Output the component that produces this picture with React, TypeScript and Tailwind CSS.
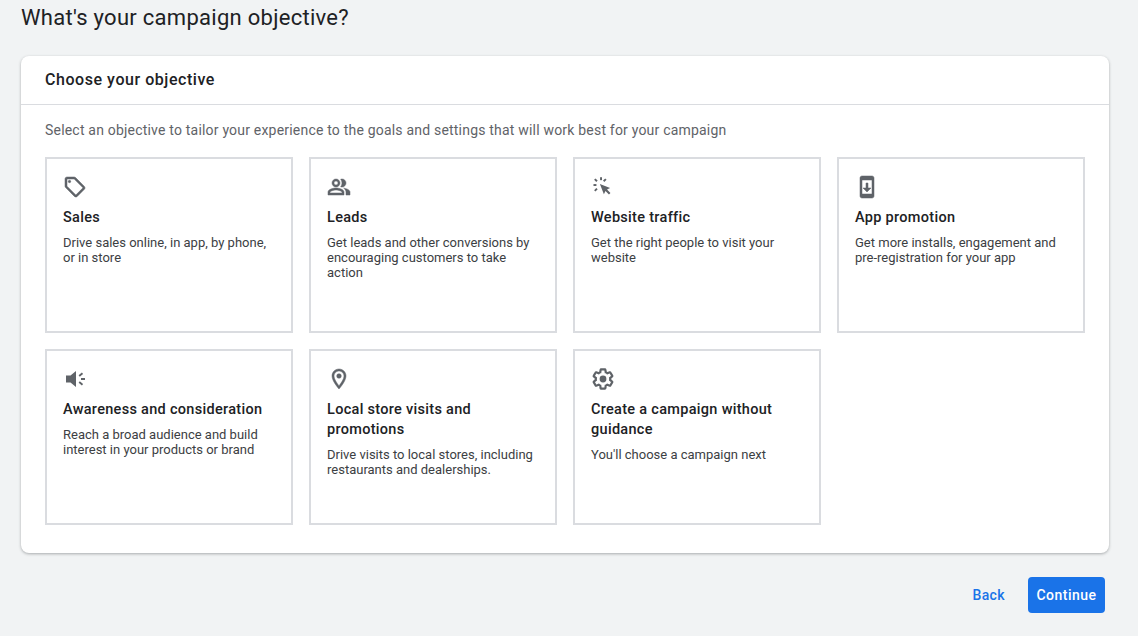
import type { ReactNode } from "react";

const iconGray = "#5f6368";

function SalesIcon() {
  return (
    <svg width="24" height="24" viewBox="0 0 24 24" fill={iconGray} stroke={iconGray} strokeWidth="0.5">
      <path d="M21.410 11.410l-8.830-8.830C12.210 2.210 11.700 2 11.170 2H4C2.900 2 2 2.900 2 4v7.170c0 .53.21 1.040.59 1.410l8.830 8.830c.78.78 2.050.78 2.830 0l7.170-7.170c.78-.78.78-2.040-.01-2.830zM12.830 20L4 11.170V4h7.170L20 12.830 12.830 20z" />
      <circle cx="6.500" cy="6.500" r="1.200" />
    </svg>
  );
}

function LeadsIcon() {
  return (
    <svg width="24" height="24" viewBox="0 0 24 24" fill={iconGray} stroke={iconGray} strokeWidth="0.5">
      <path d="M16.670 13.130C18.040 14.060 19 15.320 19 17v3h4v-3c0-2.180-3.570-3.470-6.330-3.870z" />
      <path d="M15 12c2.210 0 4-1.790 4-4s-1.790-4-4-4c-.47 0-.91.1-1.330.24C14.500 5.270 15 6.580 15 8s-.5 2.730-1.330 3.760c.42.14.86.24 1.330.24z" />
      <path d="M9 12c2.210 0 4-1.790 4-4s-1.790-4-4-4-4 1.790-4 4 1.790 4 4 4zm0-6c1.100 0 2 .9 2 2s-.9 2-2 2-2-.9-2-2 .9-2 2-2z" />
      <path d="M9 13c-2.670 0-8 1.340-8 4v3h16v-3c0-2.660-5.330-4-8-4zm6 5H3v-.99C3.200 16.290 6.300 15 9 15s5.800 1.290 6 2z" />
    </svg>
  );
}

function TrafficIcon() {
  return (
    <svg width="24" height="24" viewBox="0 0 27 27" fill={iconGray}>
      <path d="M10.200 2.500h2.200v3.300h-2.200z" />
      <path d="M2.800 10.200h3.300v2.200H2.800z" />
      <path d="M5 3.800l2.500 2.500-1.500 1.500-2.500-2.500z" />
      <path d="M17.500 5.300l-2.500 2.500-1.500-1.500L16 3.800z" />
      <path d="M6 14.600l1.500 1.500L5 18.600l-1.500-1.500z" />
      <path d="M10 10l11.500 4.600-3.500 1.800 3.900 3.900-1.700 1.700-3.900-3.900-1.800 3.500z" />
    </svg>
  );
}

function AppIcon() {
  return (
    <svg width="24" height="24" viewBox="0 0 24 24" fill={iconGray} stroke={iconGray} strokeWidth="0.5">
      <path d="M17 1.010L7 1c-1.100 0-2 .9-2 2v18c0 1.100.9 2 2 2h10c1.100 0 2-.9 2-2V3c0-1.100-.9-1.990-2-1.990zM17 19H7V5h10v14zm-1-6h-3V8h-2v5H8l4 4 4-4z" />
    </svg>
  );
}

function AwarenessIcon() {
  return (
    <svg width="24" height="24" viewBox="0 0 24 24" fill={iconGray}>
      <path d="M3 8.500h4.500L13 4v16l-5.500-4.500H3z" />
      <path d="M18 11h4v2h-4z" />
      <path d="M15.600 8.200l3.300-2.700 1.200 1.500-3.300 2.700z" />
      <path d="M15.600 15.800l1.200-1.500 3.300 2.700-1.200 1.500z" />
    </svg>
  );
}

function StoreIcon() {
  return (
    <svg width="24" height="24" viewBox="0 0 24 24" fill={iconGray} stroke={iconGray} strokeWidth="0.5">
      <path d="M12 2C8.130 2 5 5.130 5 9c0 5.250 7 13 7 13s7-7.750 7-13c0-3.870-3.130-7-7-7zM7 9c0-2.760 2.240-5 5-5s5 2.240 5 5c0 2.880-2.880 7.190-5 9.880C9.920 16.210 7 11.850 7 9z" />
      <circle cx="12" cy="9" r="2.300" />
    </svg>
  );
}

function GuidanceIcon() {
  return (
    <svg width="24" height="24" viewBox="0 0 24 24">
      <path
        fill="none"
        stroke={iconGray}
        strokeWidth="2.200"
        d="M19.140 12.940c.04-.3.06-.61.06-.94 0-.32-.02-.64-.07-.94l2.030-1.580c.18-.14.23-.41.12-.61l-1.920-3.320c-.12-.22-.37-.29-.59-.22l-2.390.96c-.5-.38-1.030-.7-1.620-.94l-.36-2.540c-.04-.24-.24-.41-.48-.41h-3.840c-.24 0-.43.17-.47.41l-.36 2.540c-.59.24-1.130.57-1.620.94l-2.390-.96c-.22-.08-.47 0-.59.22L2.740 8.870c-.12.21-.08.47.12.61l2.030 1.580c-.05.3-.09.63-.09.94s.02.64.07.94l-2.030 1.580c-.18.14-.23.41-.12.61l1.920 3.320c.12.22.37.29.59.22l2.390-.96c.5.38 1.030.7 1.620.94l.36 2.540c.05.24.24.41.48.41h3.840c.24 0 .44-.17.47-.41l.36-2.540c.59-.24 1.130-.56 1.620-.94l2.390.96c.22.08.47 0 .59-.22l1.920-3.320c.12-.22.07-.47-.12-.61l-2.010-1.580z"
      />
      <circle cx="12" cy="12" r="3.400" fill={iconGray} />
    </svg>
  );
}

type Objective = {
  title: string;
  body: string;
  icon: ReactNode;
};

const objectives: Objective[] = [
  {
    title: "Sales",
    body: "Drive sales online, in app, by phone, or in store",
    icon: <SalesIcon />,
  },
  {
    title: "Leads",
    body: "Get leads and other conversions by encouraging customers to take action",
    icon: <LeadsIcon />,
  },
  {
    title: "Website traffic",
    body: "Get the right people to visit your website",
    icon: <TrafficIcon />,
  },
  {
    title: "App promotion",
    body: "Get more installs, engagement and pre-registration for your app",
    icon: <AppIcon />,
  },
  {
    title: "Awareness and consideration",
    body: "Reach a broad audience and build interest in your products or brand",
    icon: <AwarenessIcon />,
  },
  {
    title: "Local store visits and promotions",
    body: "Drive visits to local stores, including restaurants and dealerships.",
    icon: <StoreIcon />,
  },
  {
    title: "Create a campaign without guidance",
    body: "You'll choose a campaign next",
    icon: <GuidanceIcon />,
  },
];

function ObjectiveTile({ item }: { item: Objective }) {
  return (
    <div className="h-[176px] border-2 border-[#dadce0] bg-white px-4 pt-[16px]">
      <div className="h-6 w-6">{item.icon}</div>
      <div className="mt-[9px] text-[14.5px] leading-[20px] font-[480] tracking-[0.3px] text-[#202124]">
        {item.title}
      </div>
      <div className="mt-[7px] text-[13px] leading-[15px] text-[#3c4043]">
        {item.body}
      </div>
    </div>
  );
}

export default function App() {
  return (
    <div className="h-[636px] overflow-hidden bg-[#f1f3f4] font-['Roboto',sans-serif]">
      <h1 className="pl-[21px] pt-[3px] text-[22px] leading-[30px] font-normal tracking-[0.28px] text-[#202124]">
        What's your campaign objective?
      </h1>
      <div className="mt-[23px] mr-[29px] ml-[21px] rounded-lg bg-white shadow-[0_1px_3px_rgba(60,64,67,0.4)]">
        <div className="flex h-[49px] items-center border-b border-[#dadce0] px-6 text-[16px] font-[480] tracking-[0.55px] text-[#202124]">
          Choose your objective
        </div>
        <div className="px-6 pb-7">
          <p className="pt-[16px] text-[14px] leading-[18px] tracking-[0.2px] text-[#5f6368]">
            Select an objective to tailor your experience to the goals and settings that will work best for your campaign
          </p>
          <div className="mt-[18px] grid grid-cols-4 gap-4">
            {objectives.map((item) => (
              <ObjectiveTile key={item.title} item={item} />
            ))}
          </div>
        </div>
      </div>
      <div className="mt-6 flex items-center justify-end gap-[11px] pr-[33px]">
        <button type="button" className="h-9 px-3 text-[14px] font-medium tracking-[0.4px] text-[#1a73e8]">
          Back
        </button>
        <button type="button" className="h-9 w-[77px] rounded bg-[#1a73e8] text-[14px] font-medium tracking-[0.5px] text-white">
          Continue
        </button>
      </div>
    </div>
  );
}
